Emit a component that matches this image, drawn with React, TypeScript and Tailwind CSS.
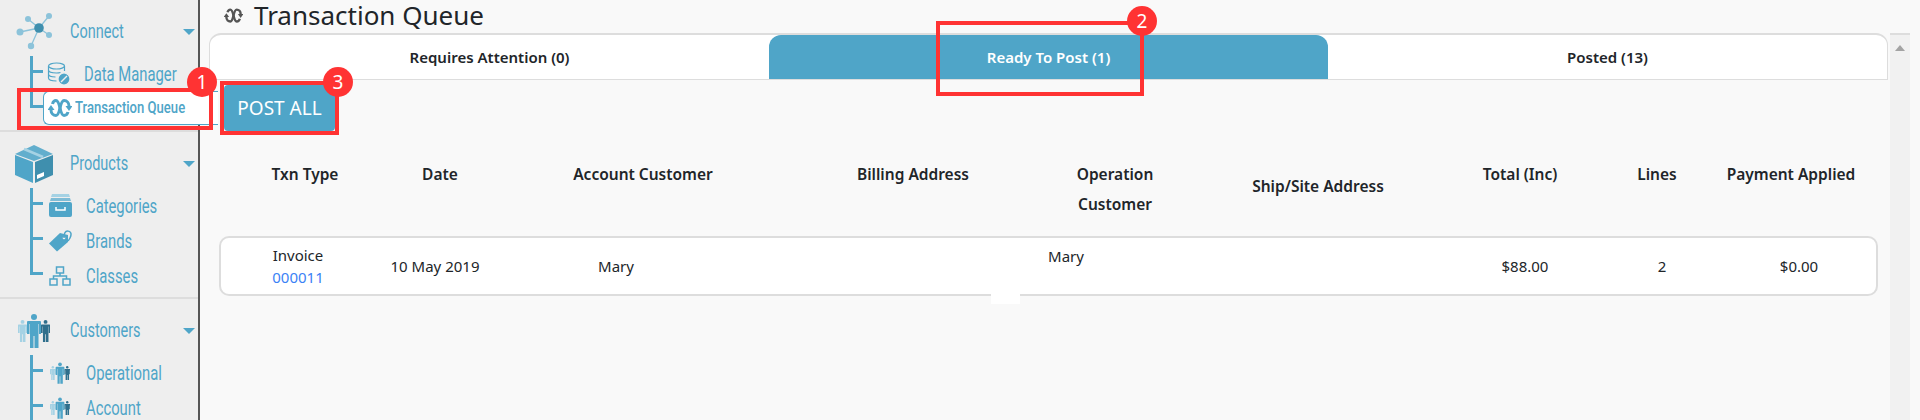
import type { ReactNode } from "react";

const blue = "#4fa5c8";

function CycleIcon({ size, color }: { size: number; color: string }) {
  return (
    <svg width={size} height={size} viewBox="0 0 24 24" fill="none" stroke={color} strokeWidth="3">
      <path d="M4.500 8C5 6 6.500 4.500 8 4.500c4.500 0 3.500 15 8 15 2 0 3.500-1.500 4-3.500" />
      <path d="M3 14c0 3.500 2.500 5.500 5 5.500 4.500 0 3.500-15 8-15 3 0 5 2.500 5 5.500" />
      <path d="M-.5 14L3 9l3.500 5z" fill={color} stroke="none" />
      <path d="M17.500 10h7L21 15z" fill={color} stroke="none" />
    </svg>
  );
}

function ConnectIcon() {
  return (
    <svg width="38" height="40" viewBox="0 0 38 40" fill="none">
      <path d="M24 16L34 4M24 16L13 7M24 16L5 20M24 16L34 23M24 16L16 34" stroke="#8cc3da" strokeWidth="1.300" />
      <circle cx="34" cy="4" r="3" fill="#8cc3da" />
      <circle cx="13" cy="7" r="3" fill="#8cc3da" />
      <circle cx="5" cy="20" r="3.500" fill="#8cc3da" />
      <circle cx="34" cy="23" r="3" fill="#8cc3da" />
      <circle cx="16" cy="34" r="3.200" fill="#8cc3da" />
      <circle cx="24" cy="16" r="4.800" fill="#3f8fae" />
    </svg>
  );
}

function DatabaseIcon() {
  return (
    <svg width="24" height="24" viewBox="0 0 24 24" fill="none" stroke={blue} strokeWidth="1.200">
      <ellipse cx="9.500" cy="4" rx="8" ry="3" />
      <path d="M1.500 4v12c0 2 3.500 3 8 3M17.500 4v5M1.500 8c0 2 3.500 3 8 3 1.500 0 3-.2 4-.5M1.500 12c0 2 3.500 3 7 3" />
      <circle cx="17" cy="17" r="6" fill={blue} stroke="#eeeeee" />
      <path d="M14 20l6-6" stroke="#eeeeee" strokeWidth="1.500" />
    </svg>
  );
}

function BoxIcon() {
  return (
    <svg width="38" height="38" viewBox="0 0 38 38">
      <path d="M19 0L38 9 19 16 0 9z" fill="#62aecd" />
      <path d="M0 10l18 7v21L0 30z" fill="#4fa5c8" />
      <path d="M20 17l18-7v20l-18 8z" fill="#3f8fae" />
      <path d="M9 4l19 8" stroke="#a5d2e4" strokeWidth="2.500" />
      <path d="M22 30l7-3v4l-7 3z" fill="#ffffff" />
    </svg>
  );
}

function DrawerIcon() {
  return (
    <svg width="23" height="23" viewBox="0 0 23 23">
      <path d="M3 0h17l1 3H2z" fill="#a5d2e4" />
      <path d="M2 4h19l1 3H1z" fill="#7fbcd6" />
      <rect x="0" y="8" width="23" height="15" rx="2" fill={blue} />
      <path d="M7 13v3h9v-3" fill="none" stroke="#ffffff" strokeWidth="1.500" />
    </svg>
  );
}

function TagIcon() {
  return (
    <svg width="23" height="23" viewBox="0 0 23 23" fill="none">
      <path d="M0 14.500L11 4l8 2 0 7L8 22.500z" fill={blue} />
      <circle cx="15" cy="9" r="1.300" fill="#eeeeee" />
      <path d="M15 9c0-3 0-7 3.500-7S23 5 21 9s-3 3-3 1" stroke={blue} strokeWidth="1.500" />
    </svg>
  );
}

function SitemapIcon() {
  return (
    <svg width="22" height="20" viewBox="0 0 22 20" fill="none" stroke={blue} strokeWidth="1.500">
      <rect x="7.500" y="1" width="7" height="6" />
      <rect x="1" y="13" width="7" height="6" />
      <rect x="14" y="13" width="7" height="6" />
      <path d="M11 7v3M4.500 13v-3h13v3" />
    </svg>
  );
}

function Person({ x, s, color }: { x: number; s: number; color: string }) {
  return (
    <g transform={`translate(${x} ${(34 - 34 * s) / 2}) scale(${s})`} fill={color}>
      <circle cx="7" cy="3" r="3" />
      <path d="M1 7h12a1 1 0 0 1 1 1v12h-2V10h-.500v24H7.500V22h-1v12H3V10h-.500v10H0V8a1 1 0 0 1 1-1z" />
    </g>
  );
}

function PeopleIcon({ w, h }: { w: number; h: number }) {
  return (
    <svg width={w} height={h} viewBox="0 0 32 34">
      <Person x={0} s={0.65} color="#a5d2e4" />
      <Person x={23} s={0.65} color="#2f6f8c" />
      <Person x={9} s={1} color={blue} />
    </svg>
  );
}

function Caret() {
  return <div className="h-0 w-0 border-x-[6px] border-t-[6px] border-x-transparent border-t-[#4fa5c8]" />;
}

function TreeArm({ last }: { last?: boolean }) {
  return (
    <div className="flex w-[13px] shrink-0 flex-col self-stretch">
      <div className="h-[17px] border-b-[3px] border-l-[3px] border-[#4fa5c8]" />
      {!last && <div className="flex-1 border-l-[3px] border-[#4fa5c8]" />}
    </div>
  );
}

function NavChild({ icon, label, last }: { icon: ReactNode; label: string; last?: boolean }) {
  return (
    <div className="flex h-[35px] pl-[30px]">
      <TreeArm last={last} />
      <div className="ml-[4px] flex w-[26px] items-center justify-center">{icon}</div>
      <span className="ml-[13px] origin-left scale-x-[0.74] self-center whitespace-nowrap font-['Roboto',sans-serif] text-[20px] text-[#4fa5c8]">
        {label}
      </span>
    </div>
  );
}

function NavHeader({ icon, label }: { icon: ReactNode; label: string }) {
  return (
    <div className="flex h-[56px] items-center pr-[3px] pt-[8px]">
      <div className="flex w-[70px] justify-center pr-[2px]">{icon}</div>
      <span className="flex-1 origin-left scale-x-[0.69] whitespace-nowrap font-['Roboto',sans-serif] text-[21px] text-[#4fa5c8]">
        {label}
      </span>
      <Caret />
    </div>
  );
}

function Sidebar() {
  return (
    <aside className="w-[200px] shrink-0 border-r-2 border-[#555555] bg-[#eeeeee]">
      <section className="h-[132px] border-b-2 border-[#dddddd]">
        <NavHeader icon={<ConnectIcon />} label="Connect" />
        <NavChild icon={<DatabaseIcon />} label="Data Manager" />
        <div className="flex h-[34px] pl-[30px]">
          <TreeArm last />
          <div className="flex flex-1 items-center gap-[3px] rounded-l-md border border-r-0 border-[#4fa5c8] bg-white pl-[4px]">
            <CycleIcon size={24} color={blue} />
            <span className="origin-left scale-x-[0.77] whitespace-nowrap font-['Roboto',sans-serif] text-[17px] font-medium text-[#4fa5c8]">
              Transaction Queue
            </span>
          </div>
        </div>
      </section>
      <section className="h-[167px] border-b-2 border-[#dddddd]">
        <NavHeader icon={<BoxIcon />} label="Products" />
        <NavChild icon={<DrawerIcon />} label="Categories" />
        <NavChild icon={<TagIcon />} label="Brands" />
        <NavChild icon={<SitemapIcon />} label="Classes" last />
      </section>
      <section>
        <NavHeader icon={<PeopleIcon w={32} h={34} />} label="Customers" />
        <NavChild icon={<PeopleIcon w={20} h={22} />} label="Operational" />
        <NavChild icon={<PeopleIcon w={20} h={22} />} label="Account" />
      </section>
    </aside>
  );
}

function Marker({ n, className }: { n: number; className: string }) {
  return (
    <div
      className={`absolute flex h-[30px] w-[30px] items-center justify-center rounded-full bg-[#ff3333] text-[19px] text-white ${className}`}
    >
      {n}
    </div>
  );
}

const headers = [
  "Txn Type",
  "Date",
  "Account Customer",
  "Billing Address",
  "",
  "Ship/Site Address",
  "Total (Inc)",
  "Lines",
  "Payment Applied",
];

export default function App() {
  return (
    <div className="relative flex h-[420px] overflow-hidden bg-[#f9f9f9] font-['Noto_Sans','Open_Sans',sans-serif] text-[#212529]">
      <Sidebar />
      <main className="min-w-0 flex-1">
        <div className="flex h-[33px] items-center pb-[3px] pl-[24px]">
          <CycleIcon size={19} color="#555555" />
          <h1 className="ml-[11px] text-[26px] leading-[30px]">Transaction Queue</h1>
        </div>
        <div className="flex">
          <div className="ml-[9px] w-[1679px]">
            <div className="grid h-[47px] grid-cols-3 rounded-t-xl border-x border-t-2 border-b border-[#dddddd] bg-white text-[15px] font-semibold">
              <div className="flex items-center justify-center">Requires Attention (0)</div>
              <div className="flex items-center justify-center rounded-t-xl bg-[#4fa5c8] text-white">
                Ready To Post (1)
              </div>
              <div className="flex items-center justify-center">Posted (13)</div>
            </div>
            <button className="ml-[15px] mt-[5px] h-[46px] w-[111px] rounded-sm bg-[#4fa5c8] text-[19px] text-white">
              POST ALL
            </button>
            <div className="mx-[10px] mt-[14px] grid h-[91px] grid-cols-[172px_98px_308px_232px_172px_234px_170px_104px_164px] text-center text-[15.5px] font-semibold">
              {headers.map((label, i) =>
                i === 4 ? (
                  <div key={i} className="pt-[14px] leading-[30px]">
                    Operation
                    <br />
                    Customer
                  </div>
                ) : (
                  <div key={i} className={i === 5 ? "pt-[26px] leading-[30px]" : "pt-[14px] leading-[30px]"}>
                    {label}
                  </div>
                ),
              )}
            </div>
            <div className="relative mx-[10px] grid h-[60px] grid-cols-[154px_120px_242px_229px_200px_274px_170px_104px_162px] items-center rounded-[10px] border-2 border-[#dddddd] bg-white text-center text-[15px]">
              <div className="leading-[22px]">
                <div>Invoice</div>
                <div className="text-[#3b82f6]">000011</div>
              </div>
              <div>10 May 2019</div>
              <div>Mary</div>
              <div />
              <div className="self-start pt-[7px]">Mary</div>
              <div />
              <div>$88.00</div>
              <div>2</div>
              <div className="pl-2">$0.00</div>
              <div className="absolute -bottom-[10px] left-[770px] h-[11px] w-[29px] bg-white" />
            </div>
          </div>
          <div className="ml-[2px] flex h-[387px] w-[20px] justify-center border-t-2 border-[#dddddd] bg-[#f1f1f1] pt-[10px]">
            <div className="h-0 w-0 border-x-[5px] border-b-[6px] border-x-transparent border-b-[#a3a3a3]" />
          </div>
        </div>
      </main>
      <div className="absolute left-[17px] top-[88px] h-[42px] w-[196px] border-4 border-[#ff3333]" />
      <div className="absolute left-[936px] top-[21px] h-[75px] w-[208px] border-4 border-[#ff3333]" />
      <div className="absolute left-[220px] top-[81px] h-[54px] w-[119px] border-4 border-[#ff3333]" />
      <Marker n={1} className="left-[187px] top-[67px]" />
      <Marker n={2} className="left-[1127px] top-[6px]" />
      <Marker n={3} className="left-[323px] top-[67px]" />
    </div>
  );
}
